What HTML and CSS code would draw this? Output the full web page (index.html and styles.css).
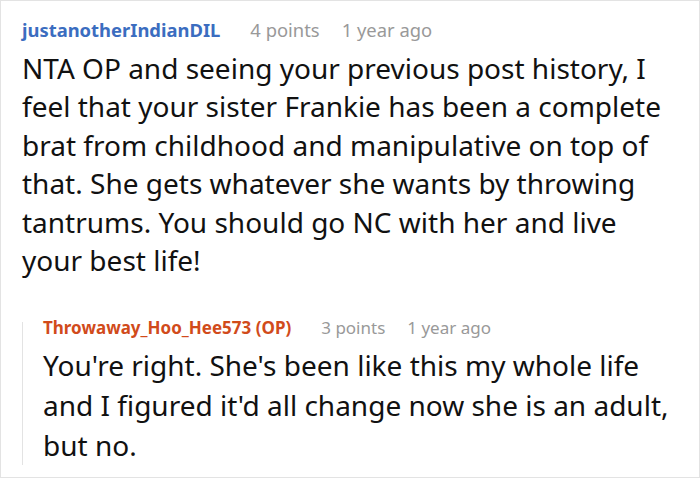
FILE: index.html
```html
<!DOCTYPE html>
<html>
<head>
<meta charset="utf-8">
<link rel="stylesheet" href="styles.css">
</head>
<body>
<div class="frame">
  <div class="comment">
    <div class="meta">
      <span class="user">justanotherIndianDIL</span>
      <span class="info">4 points</span>
      <span class="info">1 year ago</span>
    </div>
    <p class="text">NTA OP and seeing your previous post history, I feel that your sister Frankie has been a complete brat from childhood and manipulative on top of that. She gets whatever she wants by throwing tantrums. You should go NC with her and live your best life!</p>
    <div class="reply">
      <div class="meta">
        <span class="user op">Throwaway_Hoo_Hee573 (OP)</span>
        <span class="info">3 points</span>
        <span class="info">1 year ago</span>
      </div>
      <p class="text">You're right. She's been like this my whole life and I figured it'd all change now she is an adult, but no.</p>
    </div>
  </div>
</div>
</body>
</html>
```

FILE: styles.css
```css
html, body {
  margin: 0;
  padding: 0;
  background: #fff;
}
.frame {
  width: 700px;
  height: 478px;
  box-sizing: border-box;
  border: 1px solid #e3e3e3;
  font-family: "Noto Sans", "Open Sans", sans-serif;
  overflow: hidden;
}
.comment {
  padding: 17px 18px 0 21px;
}
.meta {
  display: flex;
  gap: 22px;
  font-size: 18.4px;
  line-height: 24px;
}
.user {
  font-weight: bold;
  color: #3b6dc0;
  margin-right: 8px;
}
.user.op {
  color: #d14b1b;
}
.info {
  color: #999;
}
.text {
  margin: 7px 0 0 0;
  font-size: 28px;
  line-height: 38.4px;
  color: #111;
}
.reply {
  margin-top: 42.7px;
  margin-left: 0;
  border-left: 1px solid #e3e3e3;
  padding: 0 0 0 20px;
}
.reply .meta {
  font-size: 17px;
  line-height: 12px;
}
.reply .text {
  margin: 11px 0 -4px 0;
  line-height: 40px;
}
```
